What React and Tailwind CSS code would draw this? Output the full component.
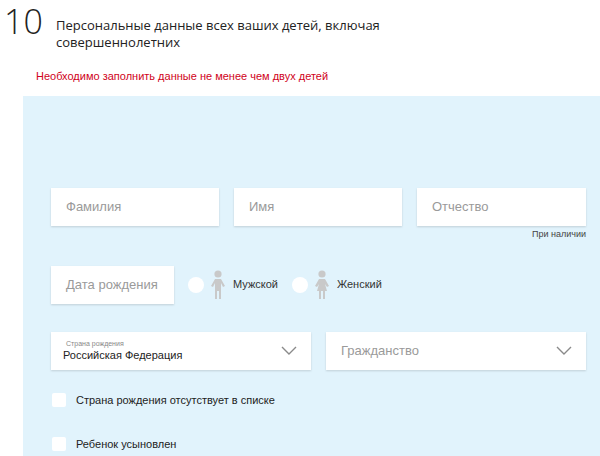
const F = { fontFamily: '"Liberation Sans", Arial, sans-serif' };
const Chevron = () => (
  <svg width="16" height="10" viewBox="0 0 16 10" fill="none" stroke="#8a8a8a" strokeWidth="1.4"><path d="M1 1l7 7 7-7" /></svg>
);
const Boy = () => (
  <svg width="14" height="30" viewBox="0 0 14 30" fill="#c9c9c9"><circle cx="7" cy="4" r="3.6" /><path d="M4 9h6l4 7-2 1-2-4v16H8V21H6v8H4V13l-2 4-2-1z" /></svg>
);
const Girl = () => (
  <svg width="14" height="30" viewBox="0 0 14 30" fill="#c9c9c9"><circle cx="7" cy="4" r="3.6" /><path d="M4 9h6l4 7-2 1-2-3 2 7H10v8H8v-8H6v8H4v-8H2l2-7-2 3-2-1z" /></svg>
);
const Input = ({ w, ph }) => (
  <div className={`h-[38px] bg-white shadow-[0_1px_2px_rgba(0,0,0,0.15)] flex items-center px-[15px] text-[13px] text-[#9a9a9a] ${w}`}>{ph}</div>
);
export default function App() {
  return (
    <div style={F} className="w-[600px] h-[456px] bg-white overflow-hidden relative">
      <div className="flex items-start pl-[4px] pt-[4px]">
        <div className="text-[34px] leading-[34px] text-[#222] w-[50px]" style={{ fontFamily: '"Open Sans", sans-serif', fontWeight: 300 }}>10</div>
        <div className="text-[13px] leading-[17px] text-[#222] pt-[13px] ml-[2px]" style={{ fontFamily: '"Open Sans", sans-serif', fontWeight: 500 }}>Персональные данные всех ваших детей, включая<br />совершеннолетних</div>
      </div>
      <div className="text-[11px] text-[#d0021b] ml-[36px] mt-[17px]">Необходимо заполнить данные не менее чем двух детей</div>
      <div className="absolute left-[23px] top-[96px] w-[600px] h-[380px] bg-[#e1f3fc] pl-[28px] pt-[92px]">
        <div className="flex gap-[15px]">
          <Input w="w-[168px]" ph="Фамилия" />
          <Input w="w-[168px]" ph="Имя" />
          <Input w="w-[169px]" ph="Отчество" />
        </div>
        <div className="w-[535px] text-right text-[9px] text-[#444] mt-[2px]">При наличии</div>
        <div className="flex items-center mt-[24px]">
          <Input w="w-[123px]" ph="Дата рождения" />
          <div className="w-[16px] h-[16px] rounded-full bg-white ml-[14px]" />
          <div className="ml-[7px]"><Boy /></div>
          <span className="text-[11px] text-[#333] ml-[8px]">Мужской</span>
          <div className="w-[16px] h-[16px] rounded-full bg-white ml-[14px]" />
          <div className="ml-[7px]"><Girl /></div>
          <span className="text-[11px] text-[#333] ml-[8px]">Женский</span>
        </div>
        <div className="flex gap-[15px] mt-[28px]">
          <div className="w-[260px] h-[38px] bg-white shadow-[0_1px_2px_rgba(0,0,0,0.15)] flex items-center justify-between pl-[12px] pr-[14px]">
            <div>
              <div className="text-[7px] text-[#888] leading-[9px] ml-[3px]">Страна рождения</div>
              <div className="text-[11px] text-[#222] leading-[15px]">Российская Федерация</div>
            </div>
            <Chevron />
          </div>
          <div className="w-[260px] h-[38px] bg-white shadow-[0_1px_2px_rgba(0,0,0,0.15)] flex items-center justify-between pl-[15px] pr-[14px]">
            <span className="text-[13px] text-[#9a9a9a]">Гражданство</span>
            <Chevron />
          </div>
        </div>
        <div className="flex items-center mt-[22px]">
          <div className="w-[14px] h-[14px] bg-white rounded-[2px] ml-[1px]" />
          <span className="text-[11px] text-[#222] ml-[10px]">Страна рождения отсутствует в списке</span>
        </div>
        <div className="flex items-center mt-[28px]">
          <div className="w-[14px] h-[14px] bg-white rounded-[2px] ml-[1px]" />
          <span className="text-[11px] text-[#222] ml-[10px]">Ребенок усыновлен</span>
        </div>
      </div>
    </div>
  );
}
